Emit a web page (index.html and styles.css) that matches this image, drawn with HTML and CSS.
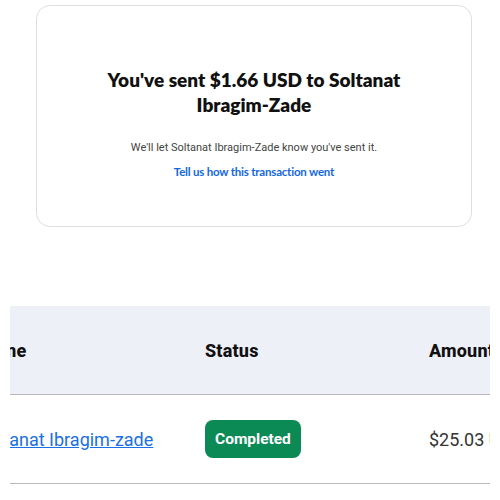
FILE: index.html
```html
<!DOCTYPE html>
<html lang="en">
<head>
    <meta charset="UTF-8">
    <title>Payment sent</title>
    <link rel="stylesheet" href="styles.css">
</head>
<body>
<div class="sent-card">
    <h1 class="sent-title">You've sent $1.66 USD to Soltanat Ibragim-Zade</h1>
    <p class="sent-note">We'll let Soltanat Ibragim-Zade know you've sent it.</p>
    <a class="sent-feedback" href="#">Tell us how this transaction went</a>
</div>

<div class="activity">
    <table class="activity-table">
        <colgroup>
            <col class="col-name">
            <col class="col-status">
            <col class="col-amount">
        </colgroup>
        <thead>
            <tr>
                <th>Name</th>
                <th>Status</th>
                <th>Amount</th>
            </tr>
        </thead>
        <tbody>
            <tr>
                <td><a href="#" class="activity-name">Soltanat Ibragim-zade</a></td>
                <td><span class="badge-completed">Completed</span></td>
                <td class="activity-amount">$25.03 USD</td>
            </tr>
        </tbody>
    </table>
</div>
</body>
</html>
```

FILE: styles.css
```css
/* reset */
body,div,h1,p,table,th,td{margin:0;padding:0}
html,body{width:100%;height:100%}
body{font-family:Roboto,'Liberation Sans',sans-serif;font-size:13px;color:#000;background:#fff;overflow:hidden}
a{text-decoration:none}
table{border-collapse:collapse;table-layout:fixed;border-spacing:0}
/* //reset */

.sent-card{
    box-sizing: border-box;
    width: 436px;
    height: 222px;
    margin: 5px 0 0 36px;
    padding-top: 61px;
    border: 1px solid #dedede;
    border-radius: 14px;
    text-align: center;
}
.sent-title{
    width: 310px;
    margin: 0 auto;
    font-family: Lato, 'Noto Sans', sans-serif;
    font-size: 19px;
    font-weight: 800;
    line-height: 25px;
    color: #111;
}
.sent-note{
    margin-top: 24px;
    font-size: 11px;
    color: #444;
}
.sent-feedback{
    display: inline-block;
    margin-top: 11px;
    font-family: Lato, 'Noto Sans', sans-serif;
    font-size: 11.5px;
    font-weight: 700;
    color: #1368e0;
    letter-spacing: -0.2px;
}

.activity{
    width: 480px;
    margin: 79px 0 0 10px;
    overflow: hidden;
}
.activity-table{
    width: 580px;
    margin-left: -32px;
}
.col-name{width:227px}
.col-status{width:224px}
.activity-table th{
    height: 88px;
    background: #eef0f8;
    border-bottom: 1px solid #b8b8b8;
    text-align: left;
    font-size: 18px;
    font-weight: 800;
    letter-spacing: 0.2px;
    color: #111;
}
.activity-table td{
    height: 88px;
    border-bottom: 1px solid #b8b8b8;
    font-size: 18px;
}
.activity-name{
    color: #1a6fe3;
    text-decoration: underline;
}
.badge-completed{
    display: inline-block;
    padding: 10px 10px;
    border-radius: 8px;
    background: #0b8a55;
    color: #fff;
    font-size: 15.5px;
    font-weight: 700;
}
.activity-amount{
    color: #333;
}
```
